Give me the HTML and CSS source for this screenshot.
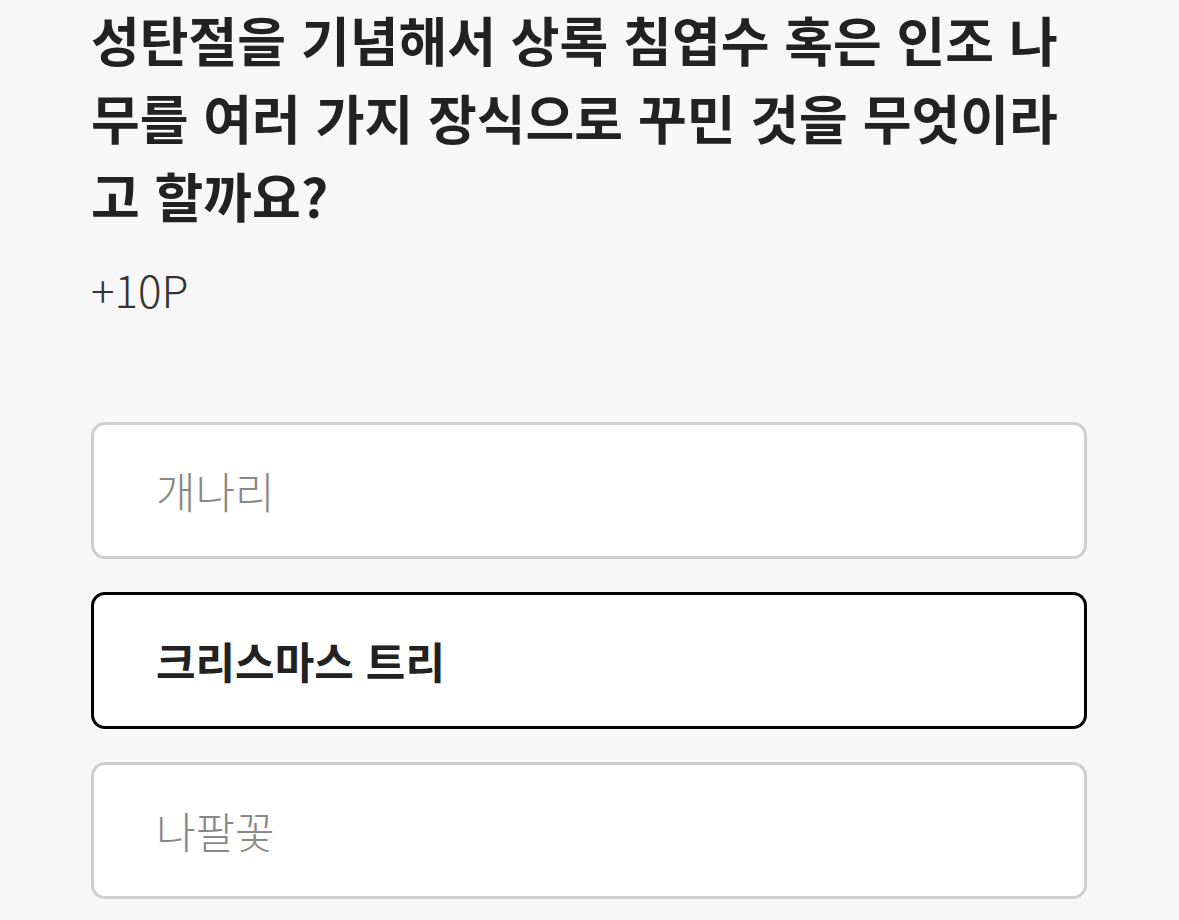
FILE: index.html
```html
<!DOCTYPE html>
<html lang="ko">
<head>
  <meta charset="UTF-8">
  <title>퀴즈</title>
  <link rel="stylesheet" href="styles.css">
</head>
<body>
  <div class="quiz">
    <h1 class="question">성탄절을 기념해서 상록 침엽수 혹은 인조 나무를 여러 가지 장식으로 꾸민 것을 무엇이라고 할까요?</h1>
    <p class="point">+10P</p>

    <ul class="options">
      <li class="option">개나리</li>
      <li class="option selected">크리스마스 트리</li>
      <li class="option">나팔꽃</li>
    </ul>
  </div>
</body>
</html>
```

FILE: styles.css
```css
body { margin: 0; background: #f7f7f7; font-family: "Noto Sans CJK KR", "Noto Sans", sans-serif; color: #222; }
.quiz { padding: 0 92px 0 91px; }
.question { margin: 0; font-size: 53px; font-weight: 700; line-height: 78px; color: #222; }
.point { margin: 25px 0 0; font-size: 44px; font-weight: 300; line-height: 60px; color: #333; }
.options { list-style: none; margin: 103px 0 0; padding: 0; display: flex; flex-direction: column; gap: 33px; }
.option { background: #fff; border: 3px solid #cfcfcf; border-radius: 14px; padding: 35px 62px; font-size: 43px; font-weight: 300; line-height: 61px; color: #888; }
.option.selected { border-color: #000; font-weight: 700; color: #222; }
```
